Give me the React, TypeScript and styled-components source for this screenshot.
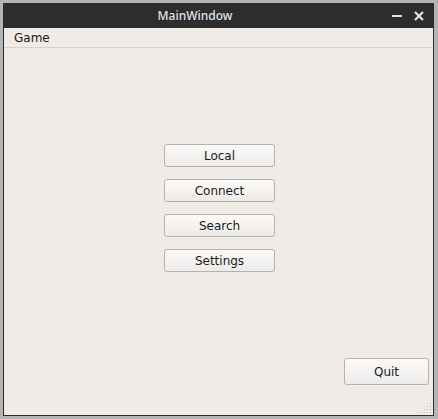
import React from "react";
import styled, { createGlobalStyle } from "styled-components";

const Global = createGlobalStyle`
  html, body { margin: 0; padding: 0; background: #b4b4b4; }
  body { width: 438px; height: 419px; overflow: hidden; }
`;

const Screen = styled.div`
  padding: 3px 0 0 3px;
`;

const Window = styled.div`
  width: 431px;
  height: 413px;
  display: flex;
  flex-direction: column;
  box-sizing: border-box;
  background: #2d2d2d;
`;

const TitleBar = styled.div`
  height: 25px;
  flex: none;
  position: relative;
  display: flex;
  align-items: center;
  justify-content: center;
  padding-right: 47px;
  color: #dfe3e8;
  font-family: "Noto Sans", sans-serif;
  font-size: 12px;
  font-weight: 500;
`;

const TitleButtons = styled.div`
  position: absolute;
  right: 10px;
  top: 0;
  height: 100%;
  display: flex;
  align-items: center;
  gap: 12px;
`;

const Body = styled.div`
  flex: 1;
  margin: 0 1px 1px 1px;
  background: #efebe7;
  display: flex;
  flex-direction: column;
  font-family: "DejaVu Sans", sans-serif;
  font-size: 12px;
  color: #1a1a1a;
  position: relative;
`;

const MenuBar = styled.div`
  height: 20px;
  border-bottom: 1px solid #d6d1cc;
  display: flex;
  align-items: center;
  padding: 1px 0 0 10px;
  box-sizing: border-box;
  flex: none;
`;

const MenuItem = styled.span`
  line-height: 18px;
`;

const Central = styled.div`
  flex: 1;
  display: flex;
  flex-direction: column;
  align-items: center;
  padding: 96px 0 0 2px;
  gap: 12px;
`;

const Button = styled.button<{ $w: number; $h: number }>`
  width: ${(p) => p.$w}px;
  height: ${(p) => p.$h}px;
  box-sizing: border-box;
  border: 1px solid #b7b1aa;
  border-radius: 3px;
  background: linear-gradient(#fbfaf9, #ecebe9);
  font-family: "DejaVu Sans", sans-serif;
  font-size: 12px;
  color: #1a1a1a;
  padding: 0;
  display: flex;
  align-items: center;
  justify-content: center;
`;

const BottomRow = styled.div`
  display: flex;
  justify-content: flex-end;
  padding: 0 4px 30px 0;
`;

const Grip = styled.svg`
  position: absolute;
  right: 1px;
  bottom: 1px;
`;

export default function App() {
  return (
    <Screen>
      <Global />
      <Window>
        <TitleBar>
          MainWindow
          <TitleButtons>
            <svg width="10" height="10" viewBox="0 0 10 10">
              <rect x="0" y="4" width="10" height="2" fill="#e6e6e6" />
            </svg>
            <svg width="10" height="10" viewBox="0 0 10 10">
              <path d="M1 1 L9 9 M9 1 L1 9" stroke="#e6e6e6" strokeWidth="2.2" />
            </svg>
          </TitleButtons>
        </TitleBar>
        <Body>
          <MenuBar>
            <MenuItem>Game</MenuItem>
          </MenuBar>
          <Central>
            <Button $w={111} $h={23}>Local</Button>
            <Button $w={111} $h={23}>Connect</Button>
            <Button $w={111} $h={23}>Search</Button>
            <Button $w={111} $h={23}>Settings</Button>
          </Central>
          <BottomRow>
            <Button $w={85} $h={27}>Quit</Button>
          </BottomRow>
          <Grip width="11" height="11" viewBox="0 0 11 11">
            {[
              [9, 1], [6, 4], [9, 4], [3, 7], [6, 7], [9, 7], [0, 10], [3, 10], [6, 10], [9, 10],
            ].map(([x, y], i) => (
              <rect key={i} x={x} y={y - 1} width="1" height="1" fill="#b9b4ae" />
            ))}
          </Grip>
        </Body>
      </Window>
    </Screen>
  );
}
